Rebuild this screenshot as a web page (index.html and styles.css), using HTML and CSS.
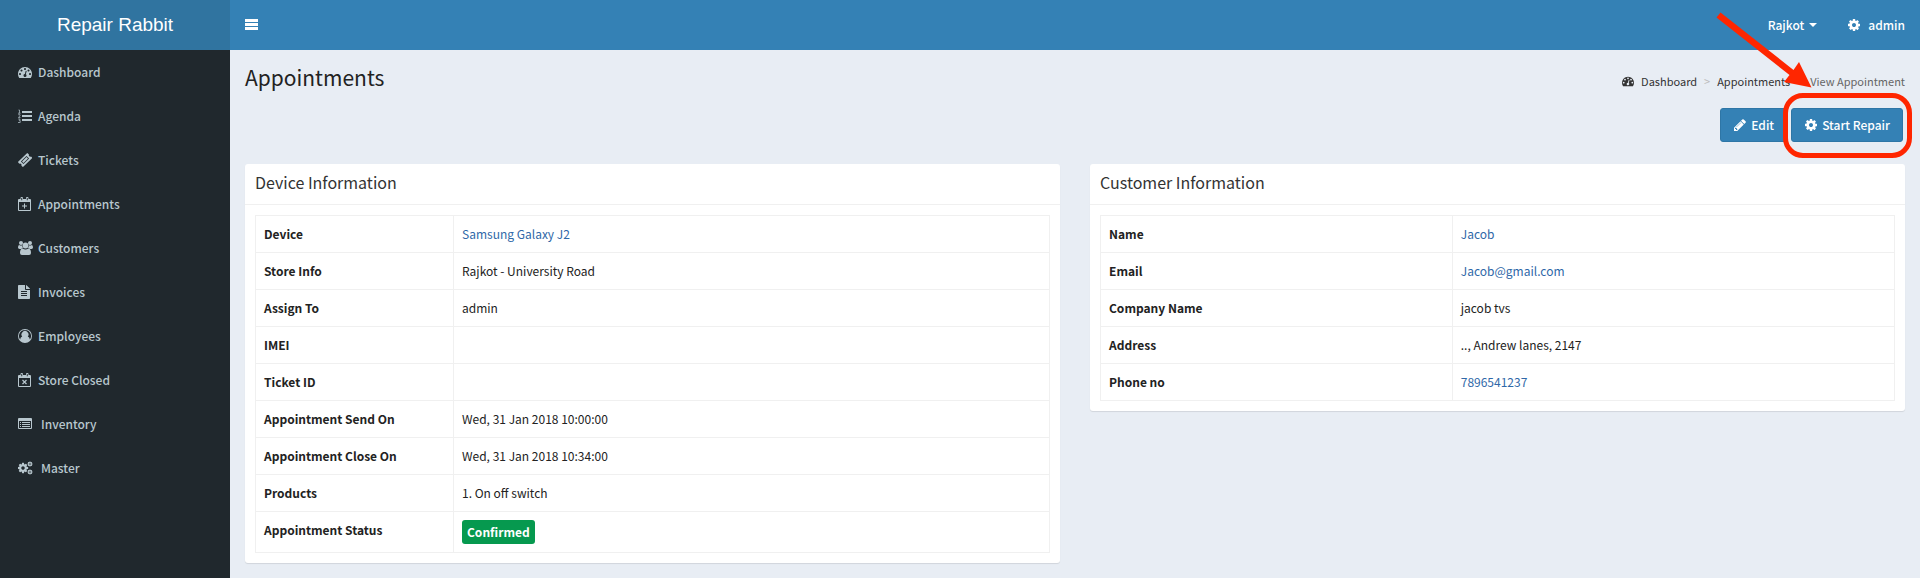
FILE: index.html
```
<!DOCTYPE html>
<html lang="en">
<head>
<meta charset="utf-8">
<title>Repair Rabbit - Appointments</title>
<link rel="stylesheet" href="styles.css">
</head>
<body>
<svg class="sprite" aria-hidden="true">
  <symbol id="cog" viewBox="0 0 1792 1792"><path d="M1152 896q0-106-75-181t-181-75-181 75-75 181 75 181 181 75 181-75 75-181zm512-109v222q0 12-8 23t-20 13l-185 28q-19 54-39 91 35 50 107 138 10 12 10 25t-9 23q-27 37-99 108t-94 71q-12 0-26-9l-138-108q-44 23-91 38-16 136-29 186-7 28-36 28h-222q-14 0-24.5-8.5t-11.5-21.5l-28-184q-49-16-90-37l-141 107q-10 9-25 9-14 0-25-11-126-114-165-168-7-10-7-23 0-12 8-23 15-21 51-66.5t54-70.5q-27-50-41-99l-183-27q-13-2-21-12.5t-8-23.5v-222q0-12 8-23t19-13l186-28q14-46 39-92-40-57-107-138-10-12-10-24 0-10 9-23 26-36 98.5-107.5t94.5-71.5q13 0 26 10l138 107q44-23 91-38 16-136 29-186 7-28 36-28h222q14 0 24.5 8.5t11.5 21.5l28 184q49 16 90 37l142-107q9-9 24-9 13 0 25 10 129 119 165 170 7 8 7 22 0 12-8 23-15 21-51 66.5t-54 70.5q26 50 41 98l183 28q13 2 21 12.5t8 23.5z"/></symbol>
  <symbol id="gauge" viewBox="0 0 1792 1792"><path d="M384 1152q0-53-37.500-90.500t-90.500-37.500-90.500 37.500-37.500 90.500 37.500 90.500 90.500 37.500 90.500-37.500 37.500-90.500zm192-448q0-53-37.500-90.500t-90.500-37.500-90.500 37.500-37.500 90.500 37.500 90.500 90.500 37.500 90.500-37.500 37.500-90.500zm428 481l101-382q6-26-7.500-48.500t-38.500-29.500-48 6.500-30 39.500l-101 382q-60 5-107 43.500t-63 98.500q-20 77 20 146t117 89 146-20 89-117q16-60-6-117t-72-91zm660-33q0-53-37.500-90.500t-90.500-37.500-90.500 37.500-37.500 90.500 37.500 90.500 90.500 37.500 90.500-37.500 37.500-90.500zm-640-640q0-53-37.500-90.500t-90.500-37.500-90.500 37.500-37.500 90.500 37.500 90.500 90.500 37.500 90.500-37.500 37.500-90.500zm448 192q0-53-37.500-90.500t-90.500-37.500-90.500 37.500-37.500 90.500 37.500 90.500 90.500 37.500 90.500-37.500 37.500-90.500zm320 448q0 261-141 483-19 29-54 29h-1402q-35 0-54-29-141-221-141-483 0-182 71-348t191-286 286-191 348-71 348 71 286 191 191 286 71 348z"/></symbol>
  <symbol id="pencil" viewBox="0 0 1792 1792"><path d="M491 1536l91-91-235-235-91 91v107h128v128h107zm523-928q0-22-22-22-10 0-17 7l-542 542q-7 7-7 17 0 22 22 22 10 0 17-7l542-542q7-7 7-17zm-54-192l416 416-832 832h-416v-416zm683 96q0 53-37 90l-166 166-416-416 166-165q36-38 90-38 53 0 91 38l235 234q37 39 37 91z"/></symbol>
  <symbol id="calendar" viewBox="0 0 14 14"><path fill-rule="evenodd" d="M1 2h1.500V1a1 1 0 0 1 1-1h.5a1 1 0 0 1 1 1v1h3V1a1 1 0 0 1 1-1h.5a1 1 0 0 1 1 1v1H12a1 1 0 0 1 1 1v10a1 1 0 0 1-1 1H1a1 1 0 0 1-1-1V3a1 1 0 0 1 1-1zM1 5v8h11V5zM3.300 1v2.200h.9V1zM8.800 1v2.200h.9V1z"/></symbol>
</svg>

<div class="app">
  <aside class="sidebar">
    <a class="logo" href="#">Repair Rabbit</a>
    <nav class="menu">
      <a class="menu-item" href="#"><svg class="icon"><use href="#gauge"/></svg><span>Dashboard</span></a>
      <a class="menu-item" href="#"><svg class="icon" viewBox="0 0 14 14"><path d="M4 2h10v2H4zM4 6h10v2H4zM4 10h10v2H4z"/><path class="line" d="M.5 1h1v3.200M0 4.200h2.600M.2 5.700h1.800v1.100L.4 8.500h2M.2 10h1.900L1.300 11.500h.9v2H0"/></svg><span>Agenda</span></a>
      <a class="menu-item" href="#"><svg class="icon" viewBox="0 0 14 14"><path fill-rule="evenodd" d="M8.700.4a.8.8 0 0 1 1.200 0l1.100 1.100a1.500 1.500 0 0 0 2 2l.8.8a.8.8 0 0 1 0 1.200L5.500 13.600a.8.800 0 0 1-1.200 0l-.9-.9a1.500 1.500 0 0 0-2-2l-1-1a.8.800 0 0 1 0-1.200zM8.500 2.900L2.900 8.500l2.600 2.600 5.600-5.600zM8.500 4l1.500 1.500L5.500 10 4 8.500z"/></svg><span>Tickets</span></a>
      <a class="menu-item" href="#"><svg class="icon" viewBox="0 0 14 14"><use href="#calendar"/><path d="M6 6.500h1v2h2v1H7v2H6v-2H4v-1h2z"/></svg><span>Appointments</span></a>
      <a class="menu-item" href="#"><svg class="icon icon-wide" viewBox="0 0 15 14"><circle cx="3" cy="2" r="2"/><circle cx="12" cy="2" r="2"/><circle cx="7.500" cy="4.500" r="2.900"/><path d="M1.200 4q1.600.9 3 .3-.2 1.700.8 2.800-1.200 0-1.900.9H1.500Q0 8 0 6.600 0 4.400 1.200 4zM13.800 4q-1.600.9-3 .3.200 1.700-.8 2.800 1.200 0 1.900.9h1.600Q15 8 15 6.600 15 4.400 13.800 4zM4.700 7.500q2.800 2 5.600 0 2.700.2 2.700 4.500 0 2-2 2H4q-2 0-2-2 0-4.300 2.700-4.500z"/></svg><span>Customers</span></a>
      <a class="menu-item" href="#"><svg class="icon" viewBox="0 0 14 14"><path fill-rule="evenodd" d="M.8 0H7v4.200q0 .8.800.8H12v8.200q0 .8-.8.8H.8Q0 14 0 13.200V.8Q0 0 .8 0zM8 0q.5.100.8.400l2.800 2.800q.3.300.4.800H8zM3 6v1h6V6zM3 8v1h6V8zM3 10v1h6v-1z"/></svg><span>Invoices</span></a>
      <a class="menu-item" href="#"><svg class="icon" viewBox="0 0 14 14"><path fill-rule="evenodd" d="M7 0a7 7 0 1 1 0 14A7 7 0 0 1 7 0zM7 1a6 6 0 0 0-4.900 9.500Q2.500 8 4.200 7.600a3.500 3.500 0 1 1 5.600 0q1.700.4 2.100 2.900A6 6 0 0 0 7 1z"/></svg><span>Employees</span></a>
      <a class="menu-item" href="#"><svg class="icon" viewBox="0 0 14 14"><use href="#calendar"/><path class="cross" d="M4.500 7l4 4M8.500 7l-4 4"/></svg><span>Store Closed</span></a>
      <a class="menu-item menu-item-spaced" href="#"><svg class="icon" viewBox="0 0 14 14"><path fill-rule="evenodd" d="M1 1h12a1 1 0 0 1 1 1v9a1 1 0 0 1-1 1H1a1 1 0 0 1-1-1V2a1 1 0 0 1 1-1zM1 4v7h12V4zM2 5h1v1H2zM4 5h8v1H4zM2 7h1v1H2zM4 7h8v1H4zM2 9h1v1H2zM4 9h8v1H4z"/></svg><span>Inventory</span></a>
      <a class="menu-item menu-item-spaced" href="#"><svg class="icon icon-wide" viewBox="0 0 15 14"><use href="#cog" x="-1" y="1" width="12" height="12"/><use href="#cog" x="9" y="0" width="6" height="6"/><use href="#cog" x="9" y="8" width="6" height="6"/></svg><span>Master</span></a>
    </nav>
  </aside>

  <div class="main">
    <header class="topbar">
      <button class="toggle" type="button" aria-label="Toggle navigation"><svg class="bars" viewBox="0 0 13 12"><path d="M0 0h13v3H0zM0 4h13v3H0zM0 8h13v3H0z"/></svg></button>
      <nav class="top-links">
        <a class="top-link" href="#">Rajkot<span class="caret"></span></a>
        <a class="top-link top-user" href="#"><svg class="icon"><use href="#cog"/></svg>admin</a>
      </nav>
    </header>

    <main class="content">
      <div class="page-head">
        <h1 class="page-title">Appointments</h1>
        <ol class="breadcrumb">
          <li><a class="crumb" href="#"><svg class="icon icon-small"><use href="#gauge"/></svg>Dashboard</a></li>
          <li><a class="crumb" href="#">Appointments</a></li>
          <li>View Appointment</li>
        </ol>
      </div>

      <div class="actions">
        <button class="btn" type="button"><svg class="icon"><use href="#pencil"/></svg>Edit</button>
        <div class="callout">
          <button class="btn" type="button"><svg class="icon"><use href="#cog"/></svg>Start Repair</button>
          <span class="callout-ring"></span>
          <svg class="callout-arrow" viewBox="0 0 104 80"><path d="M5.500.5L78.500 58 84 50 96.500 75.500 69 70 74.500 63 1.500 5.500z"/></svg>
        </div>
      </div>

      <div class="boxes">
        <section class="box">
          <h2 class="box-title">Device Information</h2>
          <div class="box-body">
            <table class="details">
              <colgroup><col class="col-quarter"><col></colgroup>
              <tr><th scope="row">Device</th><td><a class="link" href="#">Samsung Galaxy J2</a></td></tr>
              <tr><th scope="row">Store Info</th><td>Rajkot - University Road</td></tr>
              <tr><th scope="row">Assign To</th><td>admin</td></tr>
              <tr><th scope="row">IMEI</th><td></td></tr>
              <tr><th scope="row">Ticket ID</th><td></td></tr>
              <tr><th scope="row">Appointment Send On</th><td>Wed, 31 Jan 2018 10:00:00</td></tr>
              <tr><th scope="row">Appointment Close On</th><td>Wed, 31 Jan 2018 10:34:00</td></tr>
              <tr><th scope="row">Products</th><td>1. On off switch</td></tr>
              <tr><th scope="row">Appointment Status</th><td><span class="badge">Confirmed</span></td></tr>
            </table>
          </div>
        </section>

        <section class="box">
          <h2 class="box-title">Customer Information</h2>
          <div class="box-body">
            <table class="details">
              <colgroup><col class="col-wide"><col></colgroup>
              <tr><th scope="row">Name</th><td><a class="link" href="#">Jacob</a></td></tr>
              <tr><th scope="row">Email</th><td><a class="link" href="#">Jacob@gmail.com</a></td></tr>
              <tr><th scope="row">Company Name</th><td>jacob tvs</td></tr>
              <tr><th scope="row">Address</th><td>.., Andrew lanes, 2147</td></tr>
              <tr><th scope="row">Phone no</th><td><a class="link" href="#">7896541237</a></td></tr>
            </table>
          </div>
        </section>
      </div>
    </main>
  </div>
</div>
</body>
</html>
```
FILE: styles.css
```
* { box-sizing: border-box; }

body {
  margin: 0;
  background: #e8edf4;
  color: #222;
  font-family: "Noto Sans CJK SC", "Noto Sans", sans-serif;
  font-size: 12px;
  line-height: 20px;
}

a { color: inherit; text-decoration: none; }

button { font: inherit; cursor: pointer; }

.sprite { display: none; }

.icon {
  flex: none;
  width: 14px;
  height: 14px;
  fill: currentColor;
}

.icon-wide { width: 15px; }
.icon-small { width: 12px; height: 12px; }

.icon .line { fill: none; stroke: currentColor; stroke-width: .7; }
.icon .cross { fill: none; stroke: currentColor; stroke-width: 1.2; }

.app { display: flex; min-height: 100vh; }

/* Sidebar */

.sidebar {
  flex: none;
  width: 230px;
  background: #20282d;
  color: #b8c7ce;
}

.logo {
  display: block;
  height: 50px;
  background: #3074a0;
  color: #fff;
  font-family: "Liberation Sans", Arial, sans-serif;
  font-size: 19px;
  line-height: 50px;
  text-align: center;
}

.menu-item {
  display: flex;
  align-items: center;
  gap: 5px;
  padding: 12px 5px 12px 18px;
  font-weight: 500;
}

.menu-item .icon { margin-right: 1px; }
.menu-item .icon-wide { margin-right: 0; }
.menu-item-spaced { gap: 8px; }

/* Top bar */

.main { flex: 1; min-width: 0; }

.topbar {
  display: flex;
  align-items: center;
  justify-content: space-between;
  height: 50px;
  padding: 0 15px;
  background: #3481b5;
  color: #fff;
}

.toggle { display: flex; padding: 0; border: 0; background: none; color: inherit; }
.bars { width: 13px; height: 12px; fill: currentColor; }

.top-links { display: flex; gap: 30px; font-weight: 500; }
.top-link { display: flex; align-items: center; gap: 5px; }
.top-user { gap: 7px; }

.caret {
  border-top: 4px solid;
  border-right: 4px solid transparent;
  border-left: 4px solid transparent;
}

/* Page header */

.content { padding: 14px 15px 15px; }

.page-head {
  display: flex;
  justify-content: space-between;
  align-items: flex-start;
}

.page-title { margin: 0; font-size: 21px; font-weight: 400; line-height: 26px; }

.breadcrumb {
  display: flex;
  margin: 7px 0 0;
  padding: 0;
  color: #666;
  font-size: 11px;
  list-style: none;
}

.breadcrumb li { display: flex; }
.breadcrumb li + li::before { content: ">"; width: 20px; color: #bbb; text-align: center; }
.crumb { display: flex; align-items: center; gap: 7px; color: #333; }

.actions {
  display: flex;
  justify-content: flex-end;
  gap: 4px;
  margin: 17px 2px 22px 0;
}

.btn {
  display: flex;
  align-items: center;
  gap: 4px;
  height: 34px;
  padding: 0 12px;
  border: 1px solid #2e76a6;
  border-radius: 3px;
  background: #3481b5;
  color: #fff;
  font-weight: 500;
}

/* Callout drawn over the button */

.callout { position: relative; }

.callout-ring {
  position: absolute;
  inset: -15px -9px -16px -8px;
  border: 5px solid #ff2600;
  border-radius: 20px;
  pointer-events: none;
}

.callout-arrow {
  position: absolute;
  right: 84px;
  bottom: 50px;
  width: 104px;
  height: 80px;
  fill: #ff2600;
  pointer-events: none;
}

/* Boxes */

.boxes {
  display: grid;
  grid-template-columns: 1fr 1fr;
  align-items: start;
  gap: 30px;
}

.box {
  border-radius: 3px;
  background: #fff;
  box-shadow: 0 1px 1px rgba(0, 0, 0, .1);
}

.box-title {
  margin: 0;
  padding: 8px 10px 12px;
  border-bottom: 1px solid #f0f0f0;
  color: #333;
  font-size: 16px;
  font-weight: 400;
  line-height: 20px;
}

.box-body { padding: 10px; }

.details { width: 100%; border-collapse: collapse; table-layout: fixed; }
.col-quarter { width: 198px; }
.col-wide { width: 44.3%; }

.details th,
.details td {
  height: 37px;
  padding: 8px;
  border: 1px solid #f0f0f0;
  text-align: left;
  vertical-align: top;
}

.details th { font-weight: 700; }

.link { color: #2f68a8; }

.badge {
  display: inline-block;
  padding: 2px 5px;
  border-radius: 3px;
  background: #06994f;
  color: #fff;
  font-weight: 700;
  vertical-align: top;
}
```
